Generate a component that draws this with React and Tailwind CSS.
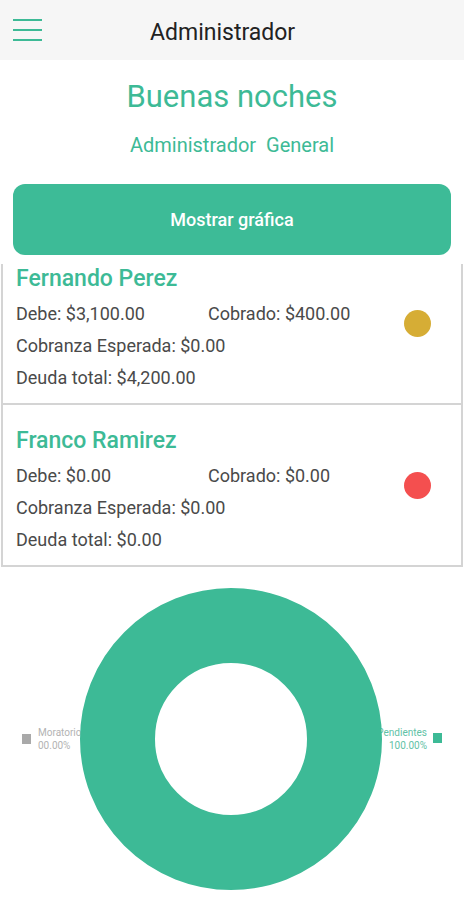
import React from "react";

const GREEN = "#3dba96";

const deudores = [
  { nombre: "Fernando Perez", debe: "$3,100.00", cobrado: "$400.00", esperada: "$0.00", total: "$4,200.00", color: "bg-[#d6ad35]" },
  { nombre: "Franco Ramirez", debe: "$0.00", cobrado: "$0.00", esperada: "$0.00", total: "$0.00", color: "bg-[#f44f4f]" },
];

const DeudorCard = ({ d }) => {
  return (
    <div className="flex items-center border-b-2 border-[#d4d4d4] pt-[24px] pb-[9px] pl-[13px]">
      <div className="flex-1">
        <div className="text-[23px] leading-[24px] font-medium text-[#3dba96]">{d.nombre}</div>
        <div className="mt-[7px] text-[18px] leading-[32px] text-[#4a4a4a]">
          <div className="flex">
            <span className="w-[192px]">Debe: {d.debe}</span>
            <span>Cobrado: {d.cobrado}</span>
          </div>
          <div>Cobranza Esperada: {d.esperada}</div>
          <div>Deuda total: {d.total}</div>
        </div>
      </div>
      <div className={`w-[27px] h-[27px] rounded-full mr-[30px] mb-[14px] ${d.color}`}></div>
    </div>
  );
};

const Donut = () => {
  return (
    <svg width="464" height="335" viewBox="0 0 464 335" className="block">
      {/* leyenda izquierda */}
      <rect x="22" y="167" width="9" height="10" fill="#a9a9a9" />
      <text x="38" y="169" fontSize="10" fill="#b3b3b3" fontFamily="Roboto, sans-serif">Moratorio</text>
      <text x="38" y="182" fontSize="10" fill="#b3b3b3" fontFamily="Roboto, sans-serif">00.00%</text>
      {/* leyenda derecha */}
      <rect x="433" y="166" width="9" height="10" fill={GREEN} />
      <text x="427" y="169" fontSize="10" fill="#5fc2a6" textAnchor="end" fontFamily="Roboto, sans-serif">Pendientes</text>
      <text x="427" y="182" fontSize="10" fill="#5fc2a6" textAnchor="end" fontFamily="Roboto, sans-serif">100.00%</text>
      {/* anillo */}
      <circle cx="231" cy="172" r="113.5" fill="none" stroke={GREEN} strokeWidth="75" />
    </svg>
  );
};

export default function App() {
  return (
    <div className="w-[464px] h-[900px] overflow-hidden bg-white" style={{ fontFamily: "Roboto, 'Noto Sans', sans-serif" }}>
      {/* Header */}
      <div className="h-[60px] bg-[#f6f6f6] flex items-center">
        <div className="ml-[13px] w-[29px] flex flex-col gap-[8px]">
          <div className="h-[2px] bg-[#3dba96]"></div>
          <div className="h-[2px] bg-[#3dba96]"></div>
          <div className="h-[2px] bg-[#3dba96]"></div>
        </div>
        <div className="ml-[108px] pt-[6px] text-[23px] text-[#222]">Administrador</div>
      </div>

      {/* Saludo */}
      <div className="flex flex-col items-center pt-[20px]">
        <div className="text-[31px] leading-[34px] text-[#3dba96]">Buenas noches</div>
        <div className="mt-[20px] text-[20px] leading-[22px] text-[#3dba96] whitespace-pre">Administrador  General</div>
      </div>

      <div className="px-[13px] mt-[28px]">
        <button className="w-full h-[71px] rounded-[12px] bg-[#3dbb97] text-white text-[18px] font-medium">
          Mostrar gráfica
        </button>
      </div>

      {/* Lista */}
      <div className="mt-[9px] mx-px border-x-2 border-[#d4d4d4] overflow-hidden">
        <div className="-mt-[21px]">
          {deudores.map((d) => (
            <DeudorCard key={d.nombre} d={d} />
          ))}
        </div>
      </div>

      <Donut />
    </div>
  );
}
